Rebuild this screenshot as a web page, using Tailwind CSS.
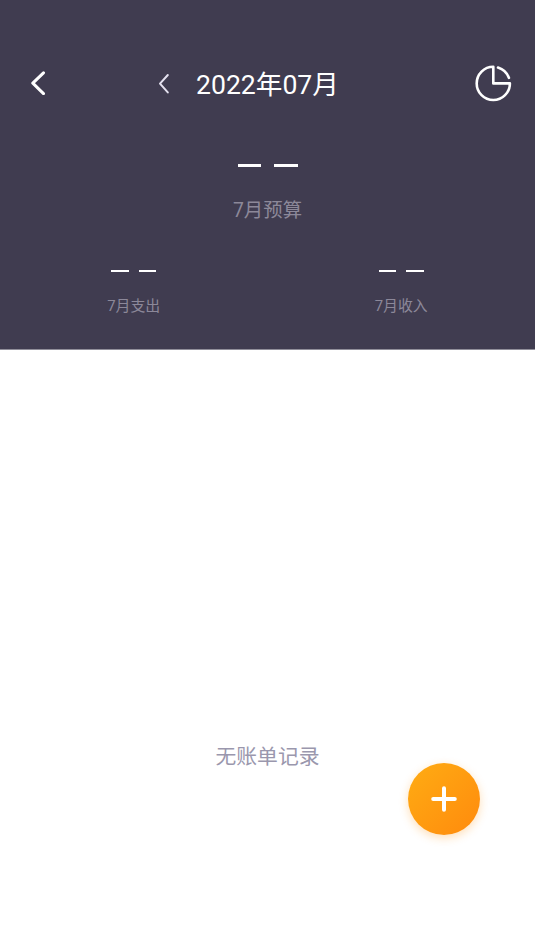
<!DOCTYPE html>
<html lang="zh-CN">
<head>
<meta charset="utf-8">
<meta name="viewport" content="width=device-width, initial-scale=1">
<title>账单</title>
<script src="https://cdn.jsdelivr.net/npm/@tailwindcss/browser@4"></script>
</head>
<body class="bg-white">
<div class="relative flex h-[952px] w-[535px] flex-col overflow-hidden font-[Roboto,'Noto_Sans_CJK_SC',sans-serif]">
  <header class="flex h-[350px] shrink-0 flex-col border-b border-[#918f9a] bg-[#403c50] pt-[59px]">
    <nav class="grid h-12 grid-cols-[76px_1fr_76px] items-center text-white">
      <button class="pl-[26px]" aria-label="返回">
        <svg class="size-6" viewBox="0 0 24 24" fill="none" stroke="currentColor" stroke-width="3" stroke-linecap="round" stroke-linejoin="round"><path d="M17.5 1.8 6.8 12.2 17.5 22.6"/></svg>
      </button>
      <div class="flex items-center pl-[76px]">
        <svg class="mr-5 h-6 w-6" viewBox="0 0 24 24" fill="none" stroke="#e4e1ef" stroke-width="2" stroke-linecap="round" stroke-linejoin="round"><path d="M15.8 4 8 12.7 15.8 21.4"/></svg>
        <h1 class="whitespace-nowrap pt-[3px] text-[26.6px] leading-8">2022年07月</h1>
      </div>
      <button class="pl-[14px]" aria-label="统计">
        <svg class="size-[40px]" viewBox="0 0 40 40" fill="none" stroke="currentColor" stroke-width="2.6" stroke-linecap="round" stroke-linejoin="round"><path d="M20.3 3.8A16.6 16.6 0 1 0 36.9 20.4H20.3Z"/><path d="M25 4.6A17 17 0 0 1 35.9 14.8"/></svg>
      </button>
    </nav>
    <section class="flex flex-col items-center pt-[57px]">
      <div class="flex gap-[13px]"><i class="h-[3px] w-[23.5px] bg-white"></i><i class="h-[3px] w-[23.5px] bg-white"></i></div>
      <p class="mt-8 text-[19.4px] leading-6 text-[#8c8899]">7月预算</p>
    </section>
    <section class="grid grid-cols-2 pt-[47px]">
      <div class="flex flex-col items-center">
        <div class="flex gap-[10px]"><i class="h-[2px] w-[17.5px] bg-white"></i><i class="h-[2px] w-[17.5px] bg-white"></i></div>
        <p class="mt-[24px] text-[14.9px] leading-5 text-[#8c8899]">7月支出</p>
      </div>
      <div class="flex flex-col items-center">
        <div class="flex gap-[10px]"><i class="h-[2px] w-[17.5px] bg-white"></i><i class="h-[2px] w-[17.5px] bg-white"></i></div>
        <p class="mt-[24px] text-[14.9px] leading-5 text-[#8c8899]">7月收入</p>
      </div>
    </section>
  </header>
  <main class="flex-1 pt-[393px] text-center">
    <p class="text-[20.8px] leading-7 text-[#9a97ad]">无账单记录</p>
  </main>
  <button class="absolute left-[408px] top-[763px] flex size-[72px] items-center justify-center rounded-full bg-linear-to-br from-[#ffac13] to-[#ff8a0d] shadow-[0_3px_10px_rgba(255,150,20,0.3)]" aria-label="添加">
    <svg class="size-7" viewBox="0 0 28 28" fill="none" stroke="white" stroke-width="4" stroke-linecap="round"><path d="M14 3.2v21.6M3.2 14h21.6"/></svg>
  </button>
</div>
</body>
</html>
